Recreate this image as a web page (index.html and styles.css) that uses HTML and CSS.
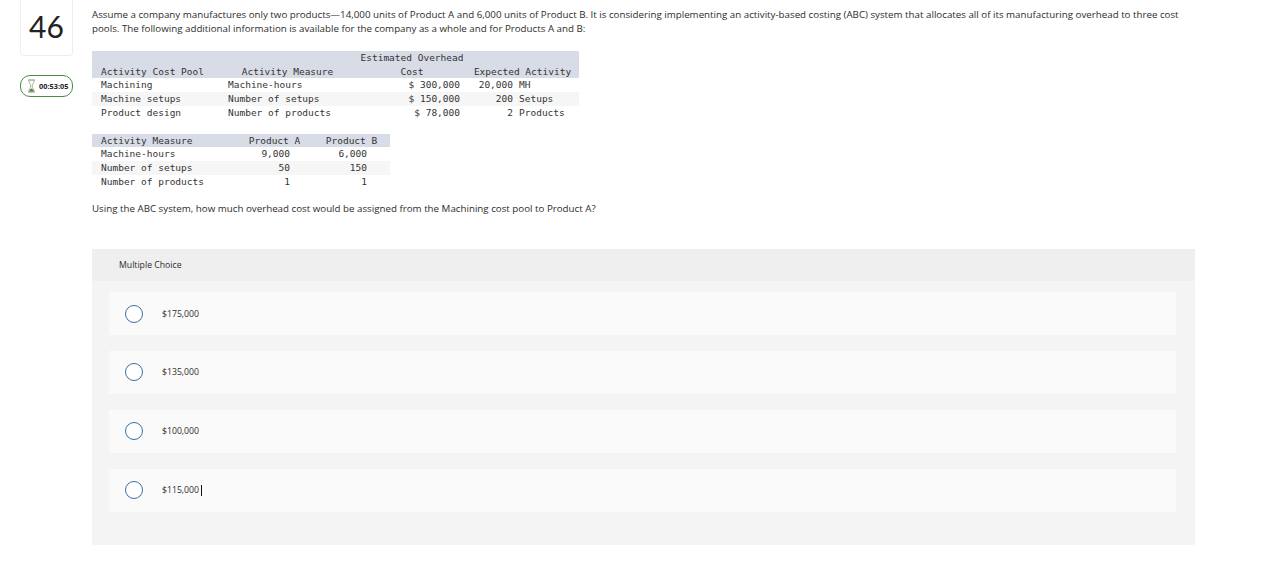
FILE: index.html
```html
<!DOCTYPE html>
<html lang="en">
<head>
    <meta charset="UTF-8">
    <meta name="viewport" content="width=device-width, initial-scale=1.0">
    <title>Question 46</title>
    <link rel="stylesheet" href="styles.css">
</head>
<body>
    <div class="page">
        <div class="side">
            <div class="number-box">46</div>
            <div class="timer">
                <svg class="hourglass" width="9" height="14" viewBox="0 0 9 14">
                    <path d="M1 1h7M1 13h7" fill="none" stroke="#8f9c8a" stroke-width="1.200"/>
                    <path d="M1.800 1.300c0 3.200 2.100 3.900 2.100 5.700s-2.100 2.500-2.100 5.700h5.400c0-3.200-2.100-3.900-2.100-5.700s2.100-2.500 2.100-5.700z" fill="#fff" stroke="#a9b5a3" stroke-width="1"/>
                    <path d="M2.200 12.500c.3-1.900 1.400-2.800 2.300-3.100.9.300 2 1.200 2.300 3.100z" fill="#4f8a45"/>
                </svg>
                <span>00:53:05</span>
            </div>
        </div>
        <div class="main">
            <p class="question">Assume a company manufactures only two products—14,000 units of Product A and 6,000 units of Product B. It is considering implementing an activity-based costing (ABC) system that allocates all of its manufacturing overhead to three cost pools. The following additional information is available for the company as a whole and for Products A and B:</p>

            <table class="data cost-table">
                <colgroup>
                    <col class="c1"><col class="c2"><col class="c3"><col class="c4"><col class="c5">
                </colgroup>
                <thead>
                    <tr>
                        <th class="left">Activity Cost Pool</th>
                        <th>Activity Measure</th>
                        <th>Estimated Overhead<br>Cost</th>
                        <th colspan="2" class="expected">Expected Activity</th>
                    </tr>
                </thead>
                <tbody>
                    <tr><td class="first">Machining</td><td class="measure">Machine-hours</td><td class="num">$ 300,000</td><td class="num tight">20,000</td><td class="unit">MH</td></tr>
                    <tr class="alt"><td class="first">Machine setups</td><td class="measure">Number of setups</td><td class="num">$ 150,000</td><td class="num tight">200</td><td class="unit">Setups</td></tr>
                    <tr><td class="first">Product design</td><td class="measure">Number of products</td><td class="num">$ 78,000</td><td class="num tight">2</td><td class="unit">Products</td></tr>
                </tbody>
            </table>

            <table class="data product-table">
                <colgroup>
                    <col class="p1"><col class="p2"><col class="p3">
                </colgroup>
                <thead>
                    <tr>
                        <th class="left">Activity Measure</th>
                        <th class="pa-head">Product A</th>
                        <th class="pb-head">Product B</th>
                    </tr>
                </thead>
                <tbody>
                    <tr><td class="first">Machine-hours</td><td class="num pa">9,000</td><td class="num pb">6,000</td></tr>
                    <tr class="alt"><td class="first">Number of setups</td><td class="num pa">50</td><td class="num pb">150</td></tr>
                    <tr><td class="first">Number of products</td><td class="num pa">1</td><td class="num pb">1</td></tr>
                </tbody>
            </table>

            <p class="question ask">Using the ABC system, how much overhead cost would be assigned from the Machining cost pool to Product A?</p>

            <div class="answers">
                <div class="answers-head">Multiple Choice</div>
                <div class="choices">
                    <div class="choice"><span class="radio"></span><span>$175,000</span></div>
                    <div class="choice"><span class="radio"></span><span>$135,000</span></div>
                    <div class="choice"><span class="radio"></span><span>$100,000</span></div>
                    <div class="choice"><span class="radio"></span><span>$115,000</span><span class="caret"></span></div>
                </div>
            </div>
        </div>
    </div>
</body>
</html>
```

FILE: styles.css
```css
body {
    margin: 0;
    font-family: "Open Sans", sans-serif;
    color: #2d2d2d;
    background: #fff;
}
.page {
    display: flex;
    align-items: flex-start;
    padding-left: 20px;
}
.side {
    width: 53px;
    flex-shrink: 0;
}
.number-box {
    height: 56px;
    box-sizing: border-box;
    padding-top: 6px;
    margin-bottom: 19px;
    border: 1px solid #eeeeee;
    border-top: none;
    border-radius: 0 0 4px 4px;
    font-family: Lato, sans-serif;
    font-size: 30px;
    line-height: 40px;
    text-align: center;
    color: #222;
}
.timer {
    height: 22px;
    box-sizing: border-box;
    display: flex;
    align-items: center;
    gap: 3px;
    padding-left: 6px;
    border: 1px solid #4f8a45;
    border-radius: 10px;
    font-size: 7.4px;
    font-weight: 700;
    color: #222;
    white-space: nowrap;
}
.main {
    width: 1103px;
    margin-left: 19px;
}
.question {
    margin: 0;
    padding-top: 8px;
    font-size: 9.75px;
    line-height: 14px;
}
.data {
    border-collapse: collapse;
    table-layout: fixed;
    font-family: "DejaVu Sans Mono", monospace;
    font-size: 9.5px;
    line-height: 13.7px;
    color: #333;
}
.data th {
    font-weight: normal;
    text-align: center;
    vertical-align: bottom;
    background: #d8dce6;
    padding: 0;
}
.data td {
    padding: 0;
    white-space: nowrap;
}
.data .left,
.data .first {
    padding-left: 9px;
    text-align: left;
}
.data .measure {
    padding-left: 7px;
}
.data .unit {
    padding-left: 3px;
}
.data .alt td {
    background: #f6f6f6;
}
.data .num {
    text-align: right;
    padding-right: 10px;
}
.data .tight {
    padding-right: 3px;
}
.data .expected {
    padding-right: 4px;
}
.cost-table {
    width: 487px;
    margin-top: 15px;
}
.c1 { width: 129px; }
.c2 { width: 133px; }
.c3 { width: 116px; }
.c4 { width: 46px; }
.c5 { width: 63px; }
.product-table {
    width: 298px;
    margin-top: 14px;
}
.p1 { width: 148px; }
.p2 { width: 71px; }
.p3 { width: 79px; }
.data .pa-head { padding-right: 2px; }
.data .pb-head { padding-left: 2px; }
.data .pa { padding-right: 21px; }
.data .pb { padding-right: 23px; }
.ask {
    padding-top: 14px;
}
.answers {
    margin-top: 33px;
    height: 296px;
    background: #f4f4f4;
    border-radius: 2px;
}
.answers-head {
    height: 32px;
    box-sizing: border-box;
    padding: 10px 0 0 27px;
    background: #efefef;
    font-size: 8.7px;
    line-height: 12px;
}
.choices {
    display: flex;
    flex-direction: column;
    gap: 16.4px;
    padding: 11px 19px 0 17px;
}
.choice {
    height: 42.5px;
    display: flex;
    align-items: center;
    padding-left: 16px;
    background: #fafafa;
    font-size: 8.7px;
}
.radio {
    width: 18px;
    height: 18px;
    box-sizing: border-box;
    margin-right: 19px;
    border: 1.5px solid #3a6f9f;
    border-radius: 50%;
    background: #fff;
}
.caret {
    width: 1px;
    height: 11px;
    margin-left: 2px;
    background: #111;
}
```
